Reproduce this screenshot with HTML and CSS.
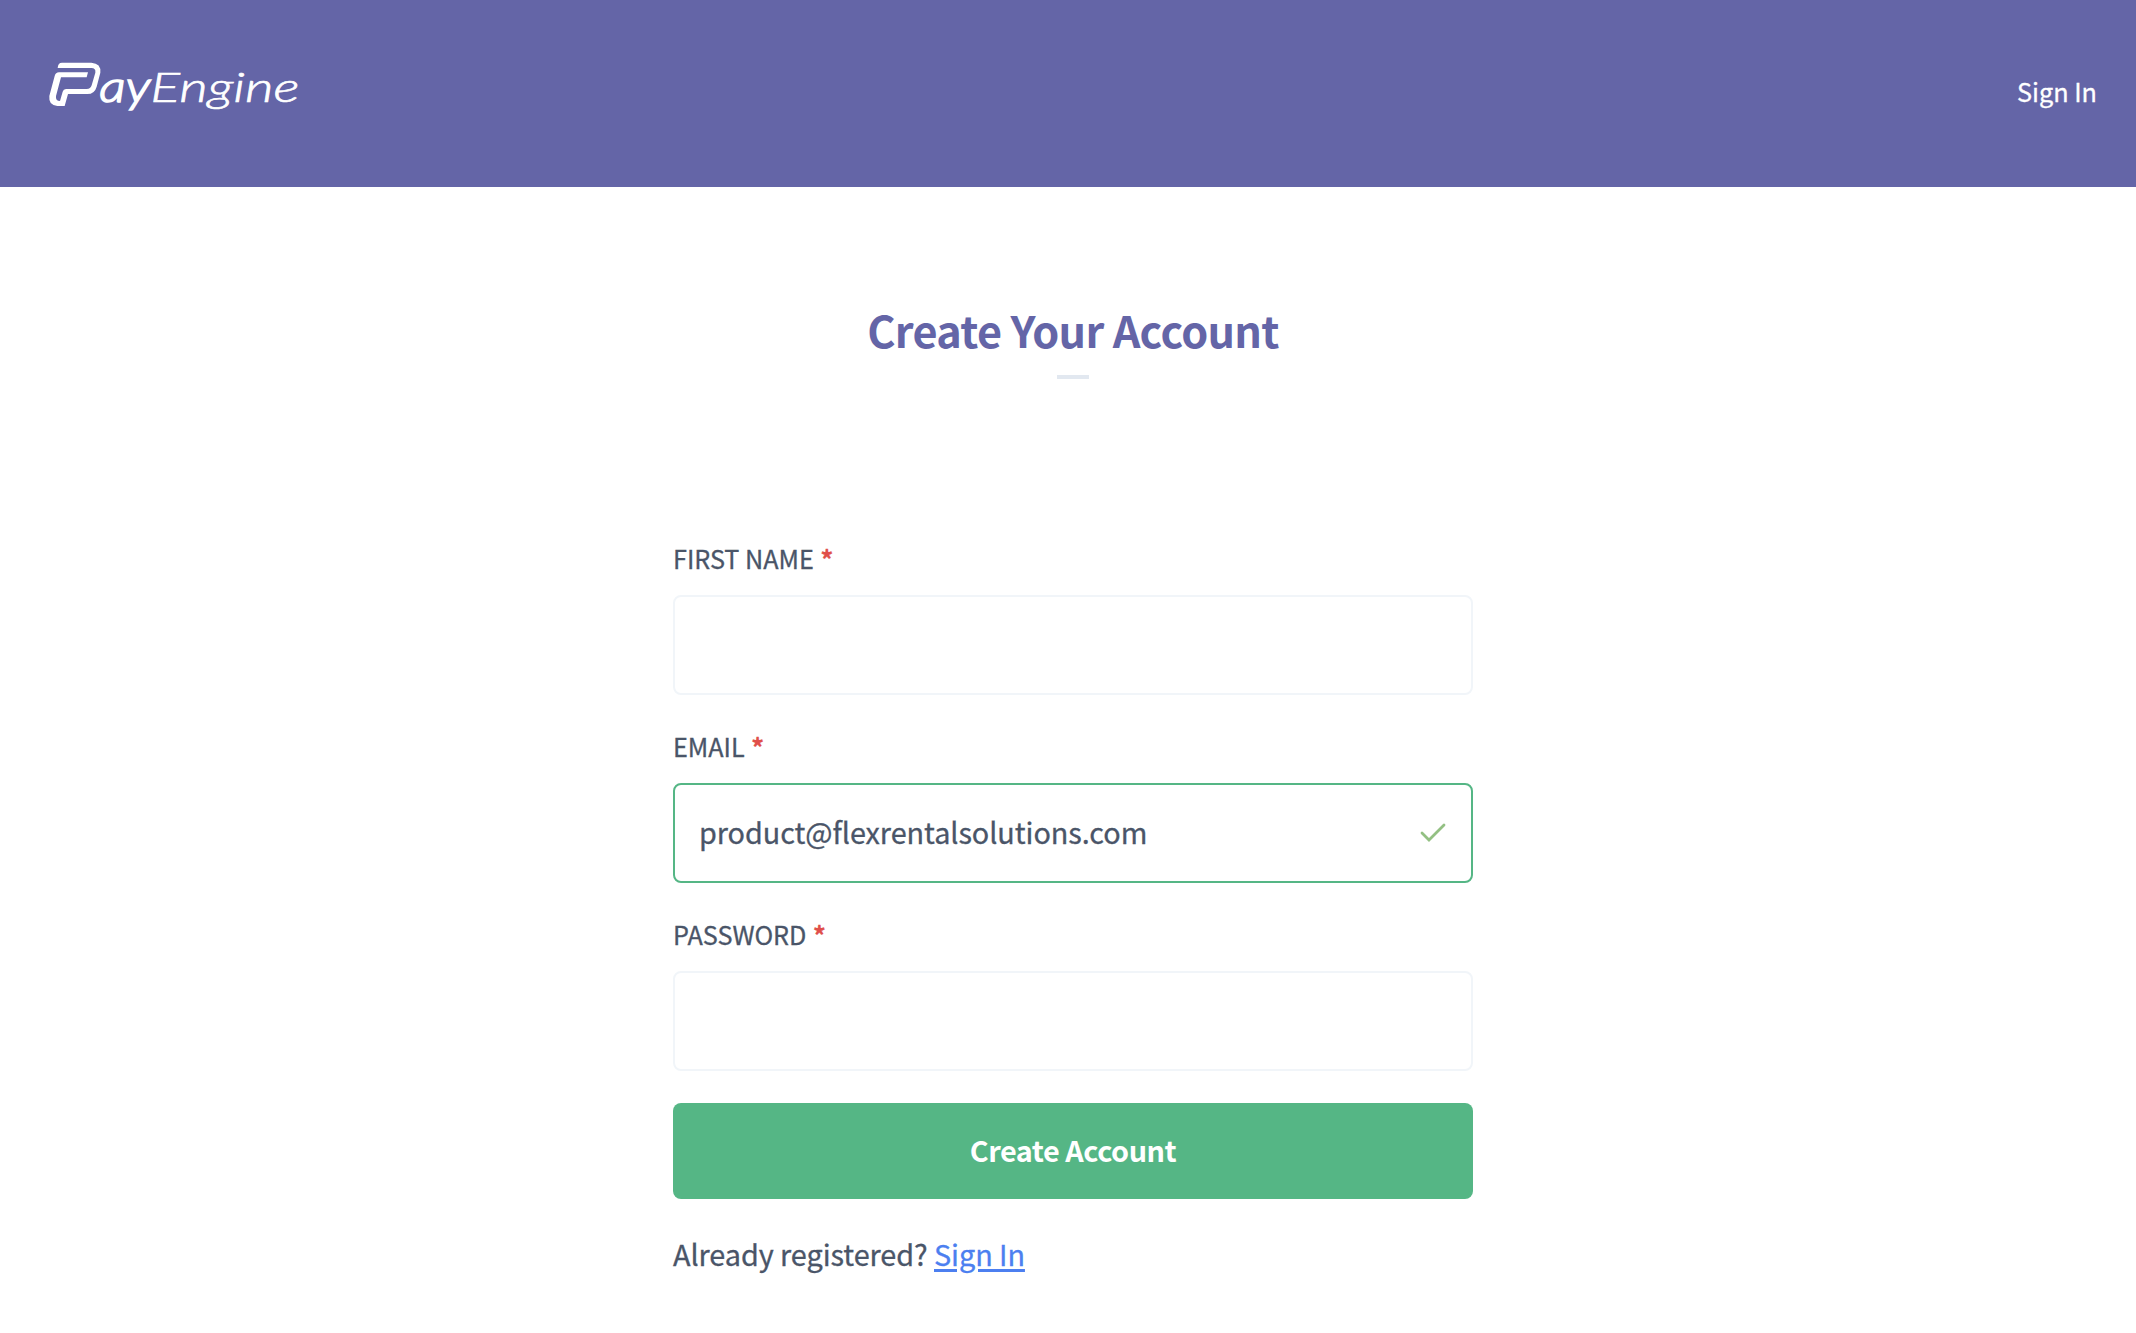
FILE: index.html
```
<!DOCTYPE html>
<html lang="en">
<head>
    <meta charset="UTF-8">
    <title>PayEngine - Create Your Account</title>
    <link rel="stylesheet" href="styles.css">
</head>
<body>
<header class="header">
    <a href="#" class="logo">
        <svg width="256" height="76" viewBox="54 24 768 228">
            <path fill="#fff" d="M83 84Q84 68 96 68H184Q214 70 211 98L200 140Q194 162 172 162H114L104 198H82Q55 196 58 168L74 108Q77 97 87 97H174L170 112H93L78 168Q76 183 90 183L98 155Q100 147 108 147H170Q182 147 185 136L196 98Q198 84 184 84Z"/>
            <g fill="#fff" stroke="#fff" font-style="italic">
                <text class="logo-text" stroke-width="4.5" x="208" y="185" font-size="130" textLength="153" lengthAdjust="spacingAndGlyphs">ay</text>
                <text class="logo-text" stroke-width="2" x="361" y="186" font-size="124" textLength="447" lengthAdjust="spacingAndGlyphs">Engine</text>
            </g>
        </svg>
    </a>
    <a href="#" class="nav-link">Sign In</a>
</header>
<div class="main">
    <h1>Create Your Account</h1>
    <div class="line"></div>
    <form action="">
        <label for="fname">FIRST NAME <span>*</span></label>
        <div class="field"><input type="text" id="fname"></div>
        <label for="email">EMAIL <span>*</span></label>
        <div class="field valid">
            <input type="text" id="email" value="product@flexrentalsolutions.com">
            <svg width="26" height="20" viewBox="0 0 26 20"><path d="M2 10L9 17L24 2" fill="none" stroke="#93c083" stroke-width="2.8" stroke-linecap="round"/></svg>
        </div>
        <label for="psw">PASSWORD <span>*</span></label>
        <div class="field"><input type="password" id="psw"></div>
        <button id="btn" type="button">Create Account</button>
    </form>
    <p>Already registered? <a href="#">Sign In</a></p>
</div>
</body>
</html>
```
FILE: styles.css
```
*{margin:0;padding:0;box-sizing:border-box;}
body{font-family:"Noto Sans CJK SC",sans-serif;color:#4a5568;background:#fff;-webkit-text-stroke:0.3px;}
.header{display:flex;justify-content:space-between;height:187px;padding:48px 39px 0 48px;background:#6465a7;}
.logo,.logo svg{display:block;}
.logo-text{font-family:Lato,sans-serif;font-weight:300;}
.nav-link{color:#fff;font-size:25.2px;line-height:36px;margin-top:25px;text-decoration:none;}
.main{width:800px;margin-left:673px;}
h1{padding-top:109px;text-align:center;color:#6465a7;font-size:43.2px;font-weight:700;line-height:66px;letter-spacing:-0.7px;-webkit-text-stroke:0;}
.line{width:32px;height:4px;margin:13px auto 0;background:#e2e8f0;}
form{padding-top:156px;}
label{display:block;font-size:25.2px;line-height:46px;height:60px;}
label span{margin-left:1px;color:#e04f4a;font-weight:700;}
.field{display:flex;align-items:center;height:100px;margin-bottom:28px;padding:0 25px 0 24px;border:2px solid #f1f5f9;border-radius:8px;}
.valid{border-color:#55b685;}
input{flex:1;height:90px;padding-bottom:4px;border:0;outline:0;background:none;font:inherit;font-size:28.8px;letter-spacing:-0.06px;color:#4a5568;}
#btn{display:block;width:100%;height:96px;margin-top:32px;padding-bottom:4px;border:0;border-radius:8px;background:#55b685;color:#fff;font:inherit;font-size:28.8px;font-weight:700;letter-spacing:-0.45px;-webkit-text-stroke:0;}
p{margin-top:31px;font-size:28.8px;line-height:48px;letter-spacing:-0.06px;}
p a{color:#4c7ff0;text-decoration-thickness:3px;text-underline-offset:3px;}
```
